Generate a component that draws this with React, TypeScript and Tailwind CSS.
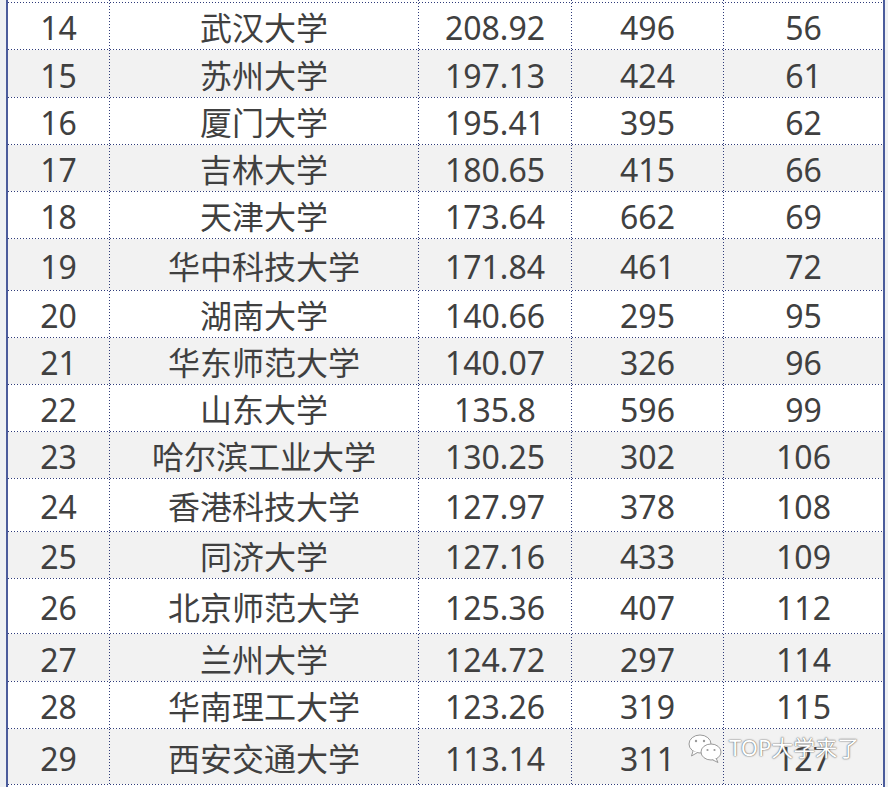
const rows: [string, string, string, string, string, number][] = [
  ['14', '武汉大学', '208.92', '496', '56', 46],
  ['15', '苏州大学', '197.13', '424', '61', 47],
  ['16', '厦门大学', '195.41', '395', '62', 46],
  ['17', '吉林大学', '180.65', '415', '66', 46],
  ['18', '天津大学', '173.64', '662', '69', 46],
  ['19', '华中科技大学', '171.84', '461', '72', 51],
  ['20', '湖南大学', '140.66', '295', '95', 46],
  ['21', '华东师范大学', '140.07', '326', '96', 46],
  ['22', '山东大学', '135.8', '596', '99', 46],
  ['23', '哈尔滨工业大学', '130.25', '302', '106', 46],
  ['24', '香港科技大学', '127.97', '378', '108', 52],
  ['25', '同济大学', '127.16', '433', '109', 46],
  ['26', '北京师范大学', '125.36', '407', '112', 54],
  ['27', '兰州大学', '124.72', '297', '114', 47],
  ['28', '华南理工大学', '123.26', '319', '115', 46],
  ['29', '西安交通大学', '113.14', '311', '127', 55],
]

const widths = ['w-[101px]', 'w-[308px]', 'w-[152px]', 'w-[151px]', 'w-[159px]']

function VSep() {
  return <div className="w-px self-stretch bg-[repeating-linear-gradient(to_bottom,#2f3b7a_0_1px,transparent_1px_3px)]" />
}

function HSep() {
  return <div className="h-px w-full bg-[repeating-linear-gradient(to_right,#2f3b7a_0_1px,transparent_1px_3px)]" />
}

function Row({ cells, h, gray }: { cells: string[]; h: number; gray: boolean }) {
  return (
    <div className={`flex ${gray ? 'bg-[#f2f2f2]' : 'bg-white'}`} style={{ height: h }}>
      {cells.map((c, i) => (
        <div key={i} className="flex">
          <div className={`${widths[i]} flex items-center justify-center pt-[4px]`}>{c}</div>
          {i < 4 && <VSep />}
        </div>
      ))}
    </div>
  )
}

function WeChatIcon() {
  return (
    <svg width="36" height="32" viewBox="0 0 36 32">
      <ellipse cx="12" cy="12" rx="11" ry="9" fill="#fff" stroke="#9a9a9a" strokeWidth="1" />
      <path d="M5 19 L3.5 24 L9.5 20.5" fill="#fff" stroke="#9a9a9a" strokeWidth="1" />
      <circle cx="8" cy="9" r="1.2" fill="#9a9a9a" />
      <circle cx="16" cy="9" r="1.2" fill="#9a9a9a" />
      <ellipse cx="23" cy="20" rx="10" ry="8" fill="#fff" stroke="#9a9a9a" strokeWidth="1" />
      <path d="M28 26 L30 30.5 L24.5 27.8" fill="#fff" stroke="#9a9a9a" strokeWidth="1" />
      <circle cx="19.5" cy="18" r="1.1" fill="#9a9a9a" />
      <circle cx="26.5" cy="18" r="1.1" fill="#9a9a9a" />
    </svg>
  )
}

export default function App() {
  return (
    <div className="relative h-[787px] w-[888px] overflow-hidden bg-[#eef0f3] pl-[6px] pr-[3px]">
      <div className="h-full border-x-2 border-[#4b5c9c] bg-white text-[32px] text-[#404040] [font-family:'Noto_Sans','Noto_Sans_CJK_SC',sans-serif]">
        <div className="flex h-[2px] bg-white">
          {widths.map((w, i) => (
            <div key={i} className="flex">
              <div className={w} />
              {i < 4 && <VSep />}
            </div>
          ))}
        </div>
        <HSep />
        {rows.map((r, idx) => (
          <div key={r[0]}>
            <Row cells={r.slice(0, 5) as string[]} h={r[5]} gray={idx % 2 === 1} />
            <HSep />
          </div>
        ))}
      </div>
      <div className="absolute left-[688px] top-[731px] flex items-center gap-[5px]">
        <WeChatIcon />
        <span className="text-[22px] text-white [font-family:'Noto_Sans','Noto_Sans_CJK_SC',sans-serif] [text-shadow:0_0_1px_#555,0_0_2px_#777]">
          TOP大学来了
        </span>
      </div>
    </div>
  )
}
